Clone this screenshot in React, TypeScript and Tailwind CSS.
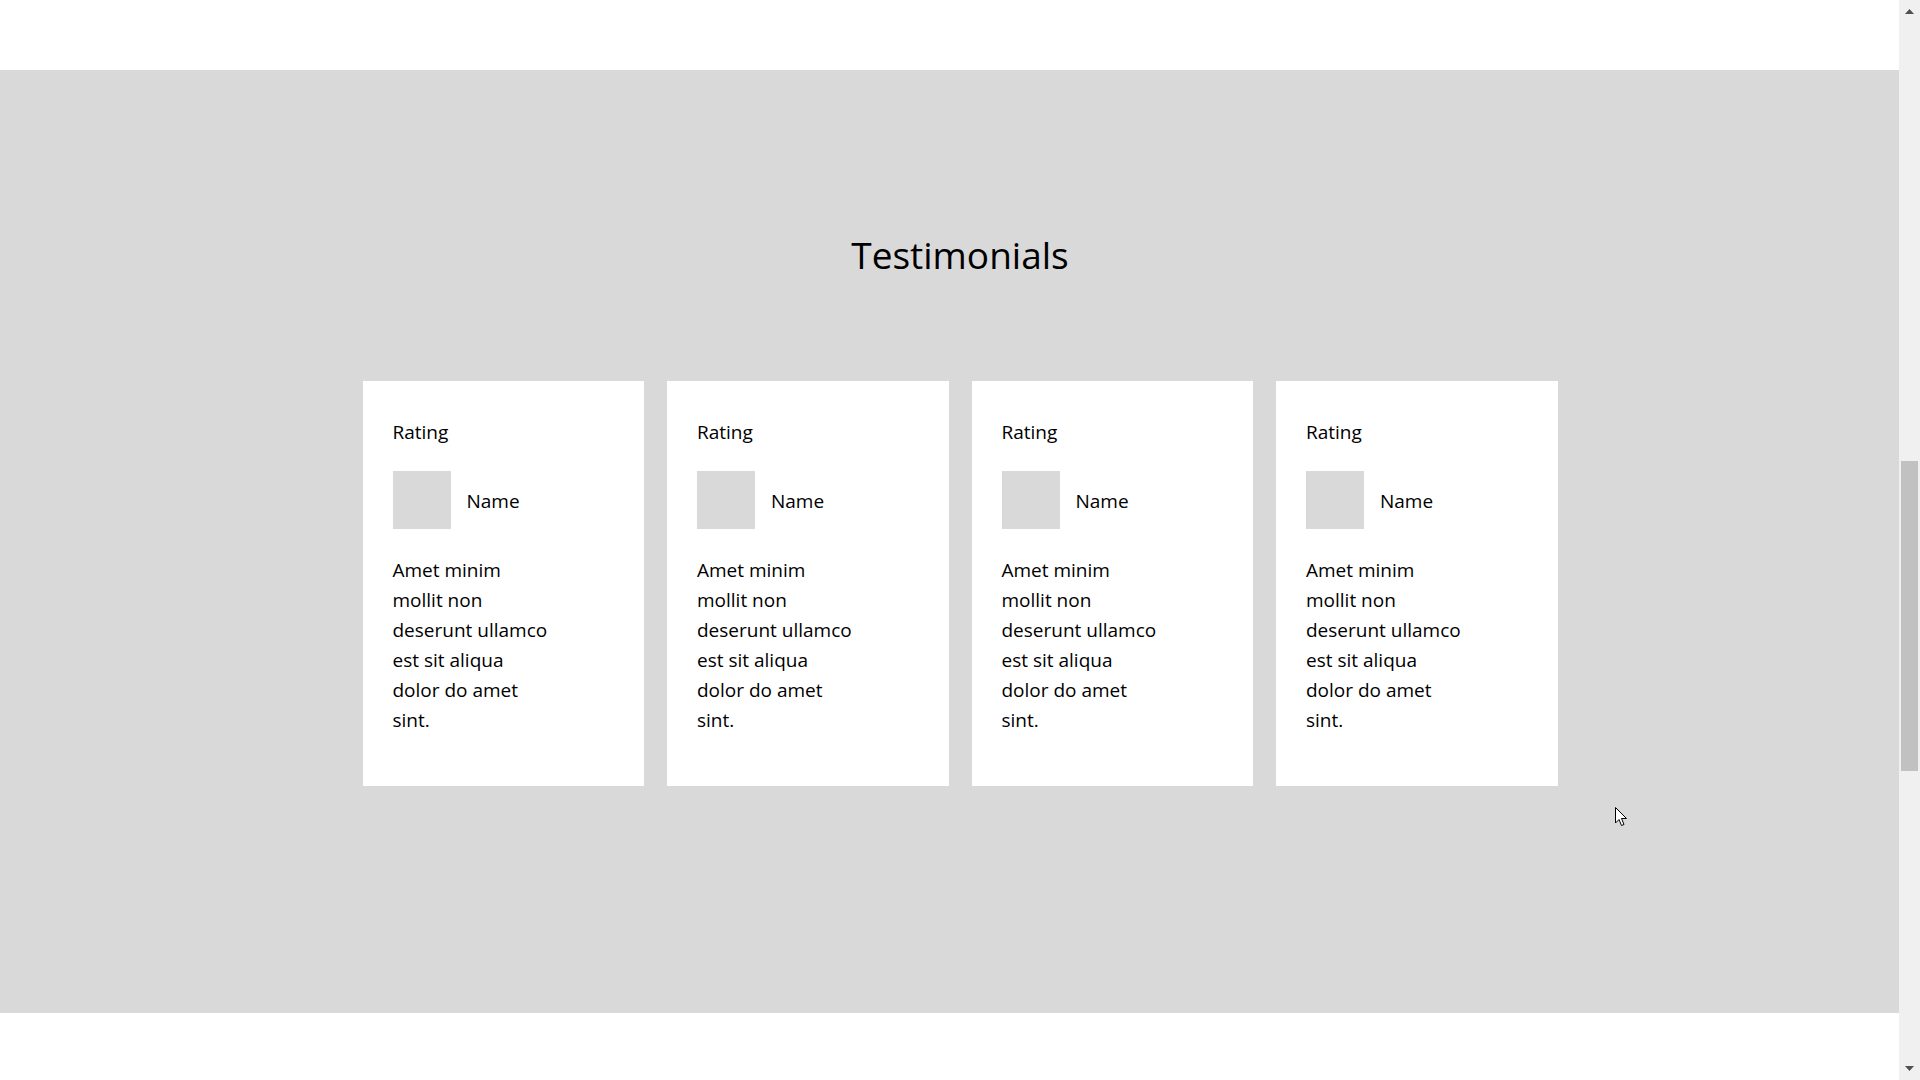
import React from "react";

const lines = ["Amet minim", "mollit non", "deserunt ullamco", "est sit aliqua", "dolor do amet", "sint."];

function Card() {
  return (
    <div className="bg-white pl-[30px] pr-[20px] pt-[36px] pb-[51px] text-[19px] leading-[30px] text-black">
      <div>Rating</div>
      <div className="mt-[24px] flex items-center gap-[16px]">
        <div className="h-[58px] w-[58px] bg-[#d9d9d9]" />
        <div className="translate-y-[1px]">Name</div>
      </div>
      <div className="mt-[26px]">
        {lines.map((l) => (
          <div key={l}>{l}</div>
        ))}
      </div>
    </div>
  );
}

export default function App() {
  return (
    <div
      className="relative h-screen w-full overflow-hidden bg-white"
      style={{ fontFamily: '"Open Sans", "Noto Sans", sans-serif' }}
    >
      <div className="h-[70px]" />
      <section className="h-[943px] bg-[#d9d9d9] pt-[161px]">
        <h2 className="text-center text-[37px] leading-[48px] font-normal text-black">Testimonials</h2>
        <div className="mx-auto mt-[102px] grid w-[1195px] grid-cols-4 gap-[23px]">
          <Card />
          <Card />
          <Card />
          <Card />
        </div>
      </section>

      {/* scrollbar */}
      <div className="absolute right-0 top-0 flex h-full w-[21px] flex-col items-center bg-[#f0f0f0]">
        <svg className="mt-[9px]" width="9" height="5" viewBox="0 0 9 5">
          <polygon points="4.5,0 9,5 0,5" fill="#505050" />
        </svg>
        <div className="mt-[447px] h-[310px] w-[17px] bg-[#c1c1c1]" />
        <div className="flex-1" />
        <svg className="mb-[9px]" width="9" height="5" viewBox="0 0 9 5">
          <polygon points="0,0 9,0 4.5,5" fill="#505050" />
        </svg>
      </div>

      {/* mouse cursor */}
      <svg className="absolute left-[1615px] top-[807px]" width="13" height="21" viewBox="0 0 13 21">
        <path d="M0.5 0.5 L0.5 16 L4 12.5 L6.5 18.5 L9 17.5 L6.5 11.5 L11.5 11.5 Z" fill="white" stroke="black" strokeWidth="1" />
      </svg>
    </div>
  );
}
